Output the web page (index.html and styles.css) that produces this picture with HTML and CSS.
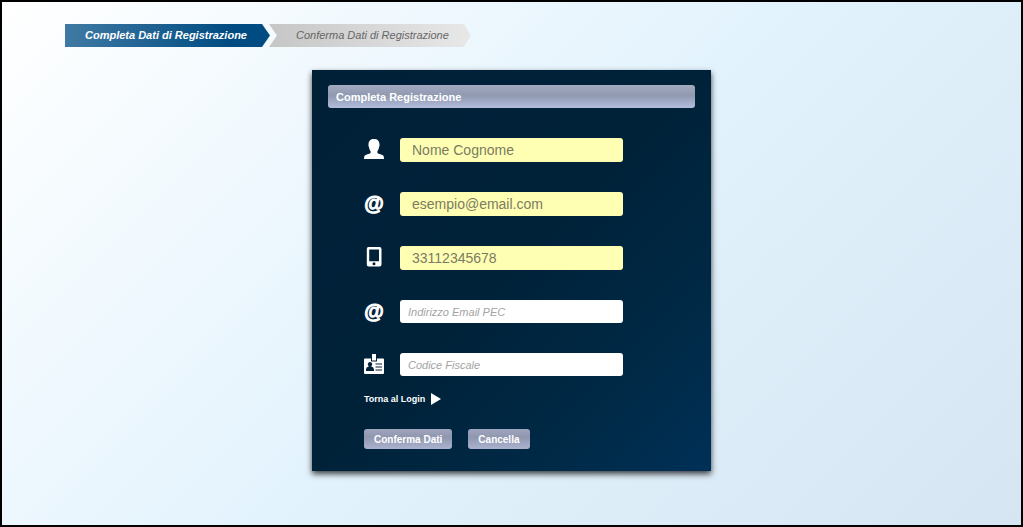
FILE: index.html
```html
<!DOCTYPE html>
<html lang="it">
<head>
<meta charset="utf-8">
<meta name="viewport" content="width=device-width, initial-scale=1">
<title>Completa Registrazione</title>
<link rel="stylesheet" href="styles.css">
</head>
<body>
<ol class="steps">
  <li class="step step-current" aria-current="step">Completa Dati di Registrazione</li>
  <li class="step step-next">Conferma Dati di Registrazione</li>
</ol>
<main class="panel">
  <h1 class="panel-title">Completa Registrazione</h1>
  <form class="form">
    <div class="field">
      <label class="field-icon" for="nome" aria-label="Nome e cognome">
        <svg viewBox="0 0 20 20" width="20" height="20"><path d="M10 0C6.500 0 4.500 2 4.500 5.500C4.300 6 4.500 7.500 5 8.200C5.300 10 5.800 11.200 6.600 12.200V14C5.500 15 1.500 15.400.500 16.800Q0 18 0 20H20Q20 18 19.500 16.800C18.500 15.400 14.500 15 13.400 14V12.200C14.200 11.200 14.700 10 15 8.200C15.500 7.500 15.700 6 15.500 5.500C15.500 2 13.500 0 10 0Z"/></svg>
      </label>
      <input class="input input-filled" id="nome" type="text" value="Nome Cognome">
    </div>
    <div class="field">
      <label class="field-icon field-at" for="email" aria-label="Email">@</label>
      <input class="input input-filled" id="email" type="email" value="esempio@email.com">
    </div>
    <div class="field">
      <label class="field-icon" for="telefono" aria-label="Cellulare">
        <svg viewBox="0 0 20 20" width="20" height="20"><path fill-rule="evenodd" d="M4.500 0H15.500Q17.500 0 17.500 2V17.500Q17.500 19.500 15.500 19.500H4.500Q2.800 19.500 2.800 17.500V2Q2.800 0 4.500 0ZM5.200 2.500V14.300H15V2.500ZM10 15.300A1.500 1.500 0 1 0 10 18.300A1.500 1.500 0 1 0 10 15.300Z"/></svg>
      </label>
      <input class="input input-filled" id="telefono" type="tel" value="33112345678">
    </div>
    <div class="field">
      <label class="field-icon field-at" for="pec" aria-label="Email PEC">@</label>
      <input class="input" id="pec" type="email" placeholder="Indirizzo Email PEC">
    </div>
    <div class="field">
      <label class="field-icon" for="codice" aria-label="Codice fiscale">
        <svg viewBox="0 0 20 20" width="20" height="20"><path fill-rule="evenodd" d="M1 4.500H7V7.500H13V4.500H19Q20 4.500 20 5.500V19Q20 20 19 20H1Q0 20 0 19V5.500Q0 4.500 1 4.500ZM6 8A2.200 2.200 0 0 0 4.700 12V12.600Q2 13.300 2 15.500V17H10V15.500Q10 13.300 7.300 12.600V12A2.200 2.200 0 0 0 6 8ZM11.500 9.500V10.500H18V9.500ZM11.500 12.500V13.500H18V12.500ZM11.500 15.500V16.500H18V15.500Z"/><path d="M8 0H12V6.500H8Z"/></svg>
      </label>
      <input class="input" id="codice" type="text" placeholder="Codice Fiscale">
    </div>
    <a class="back" href="#login">Torna al Login
      <svg viewBox="0 0 10 12" width="10" height="12" aria-hidden="true"><path d="M0 0L10 6L0 12Z"/></svg>
    </a>
    <div class="actions">
      <button class="button" type="submit">Conferma Dati</button>
      <button class="button" type="reset">Cancella</button>
    </div>
  </form>
</main>
</body>
</html>
```

FILE: styles.css
```css
* {
  box-sizing: border-box;
}

body {
  min-height: 100vh;
  margin: 0;
  padding: 22px 16px 32px;
  border: 2px solid #000;
  background: linear-gradient(135deg, #fff 0%, #e3f3fd 50%, #d5e5f2 100%);
  font-family: "Liberation Sans", Arial, sans-serif;
  font-size: 11px;
}

.steps {
  display: flex;
  flex-wrap: wrap;
  margin: 0 0 23px 47px;
  padding: 0;
  list-style: none;
}

.step {
  height: 23px;
  line-height: 23px;
  font-style: italic;
}

.step-current {
  padding: 0 23px 0 20px;
  background: linear-gradient(90deg, #407aa4, #004c82 80%);
  clip-path: polygon(0 0, calc(100% - 8px) 0, 100% 50%, calc(100% - 8px) 100%, 0 100%);
  color: #fff;
  font-weight: bold;
}

.step-next {
  margin-left: -1px;
  padding: 0 22px 0 27px;
  background: linear-gradient(90deg, #c6c6c6, #e8e8e8);
  clip-path: polygon(0 0, calc(100% - 7px) 0, 100% 50%, calc(100% - 7px) 100%, 0 100%, 8px 50%);
  color: #666;
}

.panel {
  max-width: 399px;
  margin: 0 auto;
  padding: 15px 16px 22px;
  background: linear-gradient(135deg, #002038 0%, #002239 50%, #002a47 80%, #003058 100%);
  box-shadow: 0 3px 6px rgba(0, 0, 0, 0.75);
}

.panel-title {
  height: 23px;
  margin: 0 0 30px;
  padding: 0 8px;
  border-radius: 3px;
  background: linear-gradient(#a3aac1, #8f99b0 45%, #b3bcdb);
  color: #fff;
  font-size: 11px;
  line-height: 24px;
}

.form {
  display: flex;
  flex-direction: column;
  gap: 30px;
  padding: 0 36px;
}

.field {
  display: flex;
  align-items: flex-start;
  gap: 16px;
}

.field-icon {
  display: flex;
  align-items: center;
  justify-content: center;
  width: 20px;
  height: 22px;
  color: #fff;
  fill: #fff;
}

.field-at {
  font-size: 20px;
  font-weight: bold;
  line-height: 22px;
  -webkit-text-stroke: 1px #fff;
}

.input {
  flex: 0 1 223px;
  min-width: 0;
  height: 23px;
  padding: 0 8px;
  border: 0;
  border-radius: 3px;
  background: #fff;
  color: #777;
  font: 11px "Liberation Sans", Arial, sans-serif;
}

.input::placeholder {
  color: #a3a3a3;
  font-style: italic;
}

.input-filled {
  height: 24px;
  padding: 0 12px;
  background: #ffffb3;
  color: #7b7b62;
  font-size: 14px;
}

.back {
  display: flex;
  align-items: center;
  align-self: flex-start;
  gap: 6px;
  margin-top: -13px;
  color: #fff;
  fill: #fff;
  font-size: 9px;
  font-weight: bold;
  line-height: 12px;
  text-decoration: none;
}

.actions {
  display: flex;
  gap: 16px;
  margin-top: -6px;
}

.button {
  height: 20px;
  padding: 0 10px;
  border: 0;
  border-radius: 3px;
  background: linear-gradient(#a0a5be, #8f97af 40%, #aab2cf);
  color: #fff;
  font: bold 10px "Liberation Sans", Arial, sans-serif;
}
```
